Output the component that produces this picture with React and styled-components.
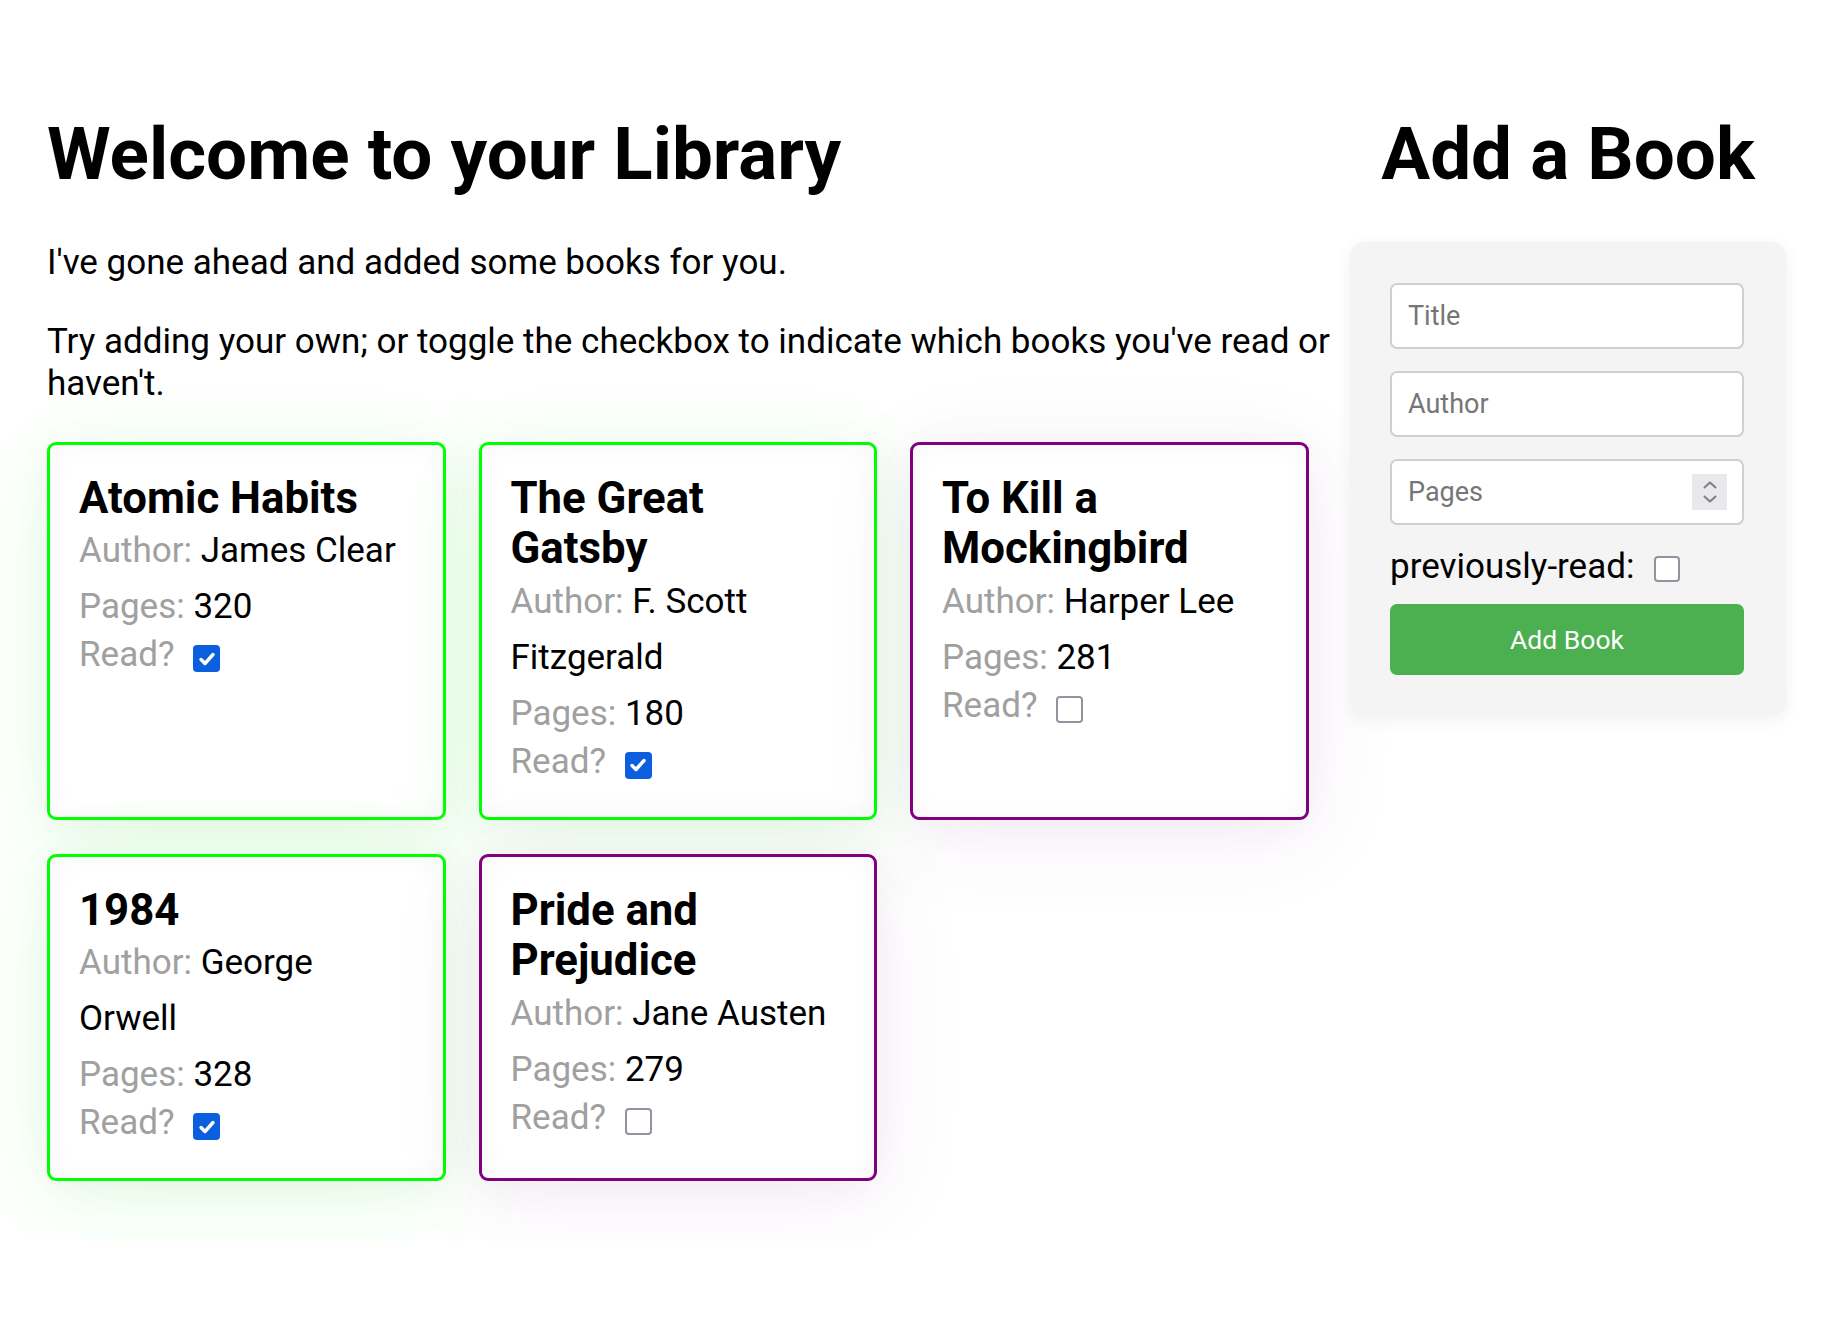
import React, { useState } from "react";
import styled, { createGlobalStyle, css } from "styled-components";

const GlobalStyle = createGlobalStyle`
  html, body { margin: 0; padding: 0; background: #ffffff; }
  body {
    font-family: Roboto, "Liberation Sans", Arial, sans-serif;
    color: #000;
  }
  * { box-sizing: border-box; }
`;

const Page = styled.div`
  display: grid;
  grid-template-columns: 1299px 436px;
  column-gap: 4px;
  padding: 110px 47px 60px;
  align-items: start;
`;

const Main = styled.main`
  display: flex;
  flex-direction: column;
`;

const Aside = styled.aside`
  display: flex;
  flex-direction: column;
`;

const Heading = styled.h1`
  margin: 0;
  font-size: 72.8px;
  line-height: 88px;
  font-weight: 700;
  letter-spacing: 0;
  text-align: ${(p) => (p.$center ? "center" : "left")};
`;

const Intro = styled.p`
  margin: ${(p) => p.$mt}px 0 0;
  font-size: 35px;
  line-height: 42px;
`;

const Grid = styled.div`
  margin-top: 37px;
  display: grid;
  grid-template-columns: repeat(3, 398.5px);
  column-gap: 33px;
  row-gap: 34px;
`;

const Card = styled.article`
  border: 3px solid ${(p) => (p.$read ? "#00ff00" : "#800080")};
  border-radius: 9px;
  padding: 28px 29px 35px;
  background: #fff;
  box-shadow: inset 0 0 26px rgba(0, 0, 0, 0.035),
    0 16px 100px
      ${(p) => (p.$read ? "rgba(0, 255, 0, 0.1)" : "rgba(128, 0, 128, 0.07)")},
    0 6px 40px rgba(0, 0, 0, 0.045);
`;

const CardTitle = styled.h2`
  margin: 0;
  font-size: 43.75px;
  line-height: 50.5px;
  font-weight: 700;
`;

const Line = styled.p`
  margin: 0;
  font-size: 35px;
  line-height: 56px;
`;

const Label = styled.span`
  color: #a0a0a0;
`;

const ReadRow = styled.label`
  display: flex;
  align-items: center;
  gap: 19px;
  height: 40px;
  font-size: 35px;
  line-height: 40px;
  color: #a0a0a0;
`;

const Box = styled.span`
  display: inline-flex;
  align-items: center;
  justify-content: center;
  width: ${(p) => p.$size}px;
  height: ${(p) => p.$size}px;
  margin-top: ${(p) => p.$mt || 0}px;
  border-radius: 4px;
  flex: none;
  ${(p) =>
    p.$checked
      ? css`
          background: #0b5fdf;
        `
      : css`
          background: #fff;
          border: 2.5px solid #9393a0;
        `}
`;

const HiddenInput = styled.input`
  position: absolute;
  opacity: 0;
  width: 0;
  height: 0;
  margin: 0;
`;

function Checkbox({ checked, onChange, size = 27, mt = 0 }) {
  return (
    <>
      <HiddenInput type="checkbox" checked={checked} onChange={onChange} />
      <Box $checked={checked} $size={size} $mt={mt}>
        {checked && (
          <svg width="20" height="20" viewBox="0 0 20 20">
            <path
              d="M4 10.5 L8 14.5 L16 5.5"
              fill="none"
              stroke="#fff"
              strokeWidth="3.4"
              strokeLinecap="round"
              strokeLinejoin="round"
            />
          </svg>
        )}
      </Box>
    </>
  );
}

const Panel = styled.form`
  margin-top: 43.5px;
  background: #f4f4f4;
  border-radius: 14px;
  padding: 41px 42px 41px 40px;
  display: flex;
  flex-direction: column;
  gap: 22px;
  box-shadow: 0 4px 18px rgba(0, 0, 0, 0.06);
`;

const Field = styled.div`
  display: flex;
  align-items: center;
  height: 66px;
  background: #fff;
  border: 2px solid #cfcfcf;
  border-radius: 7px;
  padding: 0 15px 0 16px;
`;

const TextInput = styled.input`
  flex: 1;
  min-width: 0;
  border: none;
  outline: none;
  background: transparent;
  padding: 0;
  font-family: Roboto, "Liberation Sans", Arial, sans-serif;
  font-size: 27px;
  color: #000;
  &::placeholder {
    color: #767676;
  }
`;

const Spinner = styled.span`
  width: 35px;
  height: 36px;
  background: #e9e9ed;
  display: flex;
  align-items: center;
  justify-content: center;
  flex: none;
`;

const CheckRow = styled.label`
  display: flex;
  align-items: center;
  gap: 20px;
  height: 40px;
  font-size: 35px;
  line-height: 40px;
  margin-bottom: -5px;
  color: #000;
`;

const Button = styled.button`
  height: 71px;
  border: none;
  border-radius: 7px;
  background: #4caf50;
  color: #fff;
  font-family: Roboto, "Liberation Sans", Arial, sans-serif;
  font-size: 26.5px;
  cursor: pointer;
`;

const initialBooks = [
  { title: "Atomic Habits", author: "James Clear", pages: 320, read: true },
  { title: "The Great Gatsby", author: "F. Scott Fitzgerald", pages: 180, read: true },
  { title: "To Kill a Mockingbird", author: "Harper Lee", pages: 281, read: false },
  { title: "1984", author: "George Orwell", pages: 328, read: true },
  { title: "Pride and Prejudice", author: "Jane Austen", pages: 279, read: false },
];

export default function App() {
  const [books, setBooks] = useState(initialBooks);
  const [prev, setPrev] = useState(false);

  const toggle = (i) =>
    setBooks((b) => b.map((bk, j) => (j === i ? { ...bk, read: !bk.read } : bk)));

  return (
    <>
      <GlobalStyle />
      <Page>
        <Main>
          <Heading>Welcome to your Library</Heading>
          <Intro $mt={44.3}>I've gone ahead and added some books for you.</Intro>
          <Intro $mt={36.3}>
            Try adding your own; or toggle the checkbox to indicate which books you've read or
            haven't.
          </Intro>
          <Grid>
            {books.map((b, i) => (
              <Card key={b.title} $read={b.read}>
                <CardTitle>{b.title}</CardTitle>
                <Line>
                  <Label>Author:</Label> {b.author}
                </Line>
                <Line>
                  <Label>Pages:</Label> {b.pages}
                </Line>
                <ReadRow>
                  Read?
                  <Checkbox checked={b.read} onChange={() => toggle(i)} mt={7} />
                </ReadRow>
              </Card>
            ))}
          </Grid>
        </Main>
        <Aside>
          <Heading $center>Add a Book</Heading>
          <Panel onSubmit={(e) => e.preventDefault()}>
            <Field>
              <TextInput placeholder="Title" />
            </Field>
            <Field>
              <TextInput placeholder="Author" />
            </Field>
            <Field>
              <TextInput placeholder="Pages" inputMode="numeric" />
              <Spinner>
                <svg width="16" height="26" viewBox="0 0 16 26">
                  <path
                    d="M2.5 8.5 L8 3.5 L13.5 8.5 M2.5 17.5 L8 22.5 L13.5 17.5"
                    fill="none"
                    stroke="#7e7e88"
                    strokeWidth="2"
                    strokeLinecap="round"
                    strokeLinejoin="round"
                  />
                </svg>
              </Spinner>
            </Field>
            <CheckRow>
              previously-read:
              <Checkbox checked={prev} onChange={() => setPrev(!prev)} size={26} mt={4} />
            </CheckRow>
            <Button type="submit">Add Book</Button>
          </Panel>
        </Aside>
      </Page>
    </>
  );
}
